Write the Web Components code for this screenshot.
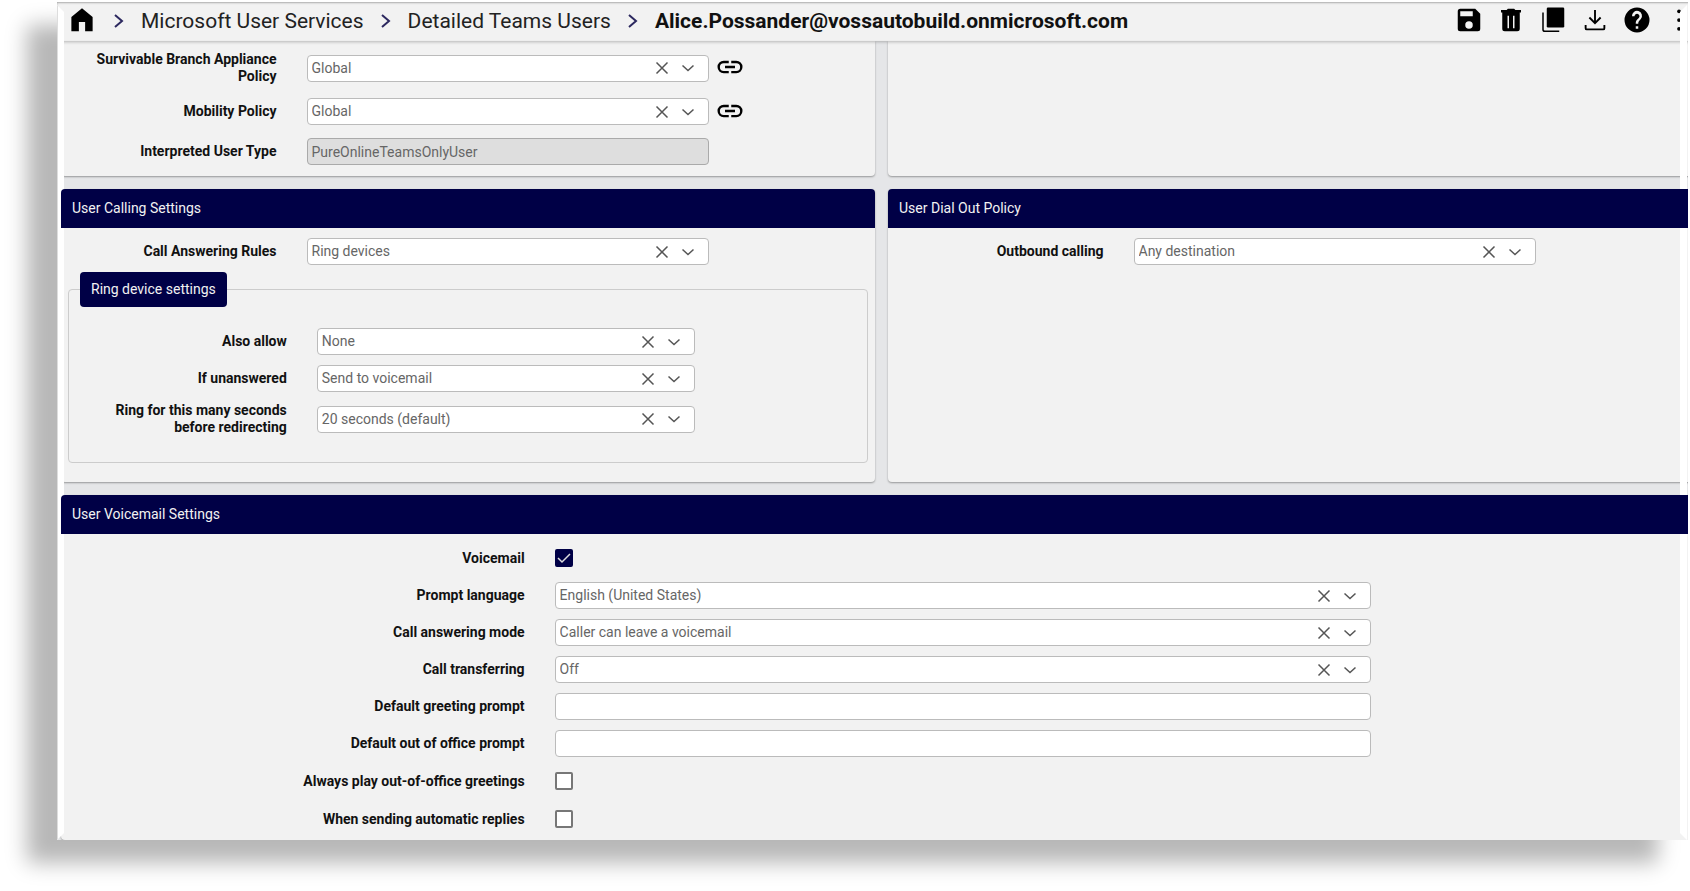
<!DOCTYPE html>
<html lang="en">
<head>
<meta charset="utf-8">
<title>Detailed Teams Users</title>
<style>
  body {
    margin: 0;
    font-family: Roboto, "Open Sans", sans-serif;
    font-size: 14px;
    line-height: 17px;
    color: #111;
  }
</style>
</head>
<body>
<app-window>
  <page-header slot="header">
    <icon-button slot="crumbs" icon="home" label="Home"></icon-button>
    <bread-crumb slot="crumbs">Microsoft User Services</bread-crumb>
    <bread-crumb slot="crumbs">Detailed Teams Users</bread-crumb>
    <bread-crumb slot="crumbs" current>Alice.Possander@vossautobuild.onmicrosoft.com</bread-crumb>
    <icon-button icon="save" label="Save"></icon-button>
    <icon-button icon="trash" label="Delete"></icon-button>
    <icon-button icon="copy" label="Clone"></icon-button>
    <icon-button icon="download" label="Export"></icon-button>
    <icon-button icon="help" label="Help"></icon-button>
    <icon-button icon="more" label="More actions"></icon-button>
  </page-header>

  <form-panel continued>
    <form-field label="Survivable Branch Appliance Policy" value="Global">
      <icon-button icon="link" label="Open policy"></icon-button>
    </form-field>
    <form-field label="Mobility Policy" value="Global">
      <icon-button icon="link" label="Open policy"></icon-button>
    </form-field>
    <form-field type="readonly" label="Interpreted User Type" value="PureOnlineTeamsOnlyUser"></form-field>
  </form-panel>
  <form-panel continued></form-panel>

  <form-panel heading="User Calling Settings">
    <form-field label="Call Answering Rules" value="Ring devices"></form-field>
    <field-group slot="group" legend="Ring device settings">
      <form-field label="Also allow" value="None"></form-field>
      <form-field label="If unanswered" value="Send to voicemail"></form-field>
      <form-field label="Ring for this many seconds before redirecting" value="20 seconds (default)"></form-field>
    </field-group>
  </form-panel>
  <form-panel heading="User Dial Out Policy">
    <form-field label="Outbound calling" value="Any destination"></form-field>
  </form-panel>

  <form-panel heading="User Voicemail Settings" wide>
    <form-field type="checkbox" label="Voicemail" checked></form-field>
    <form-field label="Prompt language" value="English (United States)"></form-field>
    <form-field label="Call answering mode" value="Caller can leave a voicemail"></form-field>
    <form-field label="Call transferring" value="Off"></form-field>
    <form-field type="text" label="Default greeting prompt"></form-field>
    <form-field type="text" label="Default out of office prompt"></form-field>
    <form-field type="checkbox" label="Always play out-of-office greetings"></form-field>
    <form-field type="checkbox" label="When sending automatic replies"></form-field>
  </form-panel>
</app-window>

<script>
(function() {
  const icons = {
    home: '<path d="M12 2.5 3.5 9.5V21h6v-7.500h5V21h6V9.500z"/>',
    save: '<path d="M17 3H5a2 2 0 0 0-2 2v14a2 2 0 0 0 2 2h14a2 2 0 0 0 2-2V7zm-5 16a3 3 0 1 1 0-6 3 3 0 0 1 0 6zm3-10H5V5h10z"/>',
    trash: '<path fill-rule="evenodd" d="M4 4h4.500l1-1h5l1 1H20v2H4zM5 6h14v13a2 2 0 0 1-2 2H7a2 2 0 0 1-2-2zm4.200 2.500v10h1.200v-10zm4.400 0v10h1.200v-10z"/>',
    copy: '<path d="M8 2h12a1 1 0 0 1 1 1v14a1 1 0 0 1-1 1H8a1 1 0 0 1-1-1V3a1 1 0 0 1 1-1z"/><path d="M4 6v13.500a1.500 1.500 0 0 0 1.500 1.500H17" fill="none" stroke="currentColor" stroke-width="1.200"/>',
    download: '<path d="M12 4v10M7.500 10l4.500 4.500 4.500-4.500M4.500 16v2.500a1 1 0 0 0 1 1h13a1 1 0 0 0 1-1V16" fill="none" stroke="currentColor" stroke-width="1.500"/>',
    help: '<path d="M12 2a10 10 0 1 0 0 20 10 10 0 0 0 0-20zm1 17h-2v-2h2zm2.070-7.750-.9.920C13.450 12.900 13 13.500 13 15h-2v-.5c0-1.100.45-2.100 1.170-2.830l1.240-1.260A2 2 0 1 0 10 9H8a4 4 0 1 1 7.070 2.250z"/>',
    more: '<circle cx="12" cy="5" r="1.500"/><circle cx="12" cy="12" r="1.500"/><circle cx="12" cy="19" r="1.500"/>',
    link: '<path d="M3.900 12A3.100 3.100 0 0 1 7 8.900h4V7H7a5 5 0 0 0 0 10h4v-1.900H7A3.100 3.100 0 0 1 3.900 12zM8 13h8v-2H8zm9-6h-4v1.900h4a3.100 3.100 0 0 1 0 6.200h-4V17h4a5 5 0 0 0 0-10z"/>'
  };

  function svg(name) {
    return `<svg viewBox="0 0 24 24" aria-hidden="true">${icons[name]}</svg>`;
  }

  class AppWindow extends HTMLElement {
    constructor() {
      super();
      this.attachShadow({ mode: 'open' }).innerHTML = `
        <style>
          :host {
            display: block;
            padding: 2px 2px 51px 57px;
            background: #fff;
          }
          /* drop shadow falls down and to the left */
          .window {
            position: relative;
            background: #e5e6e8;
            box-shadow: -30px 23px 20px 0 #b8b8b8;
          }
          .clip { overflow: hidden; }
          /* light bevel down both sides, panel headings run over it */
          .window::before, .window::after {
            content: "";
            position: absolute;
            z-index: 2;
            top: 3px;
            bottom: 0;
            width: 7px;
            background: #fff;
            pointer-events: none;
          }
          .window::before {
            left: 0;
            border-left: 1px solid #ddd;
            box-sizing: border-box;
            clip-path: polygon(0 0, 100% 7px, 100% calc(100% - 7px), 0 100%);
          }
          .window::after {
            right: 1px;
            clip-path: polygon(100% 0, 0 7px, 0 calc(100% - 7px), 100% 100%);
          }
          .content {
            display: grid;
            grid-template-columns: 1fr 1fr;
            gap: 13px;
            margin: 0 -14px 0 4px;
          }
          ::slotted([wide]) { grid-column: 1 / -1; }
        </style>
        <div class="window">
          <div class="clip">
            <slot name="header"></slot>
            <main class="content"><slot></slot></main>
          </div>
        </div>
      `;
    }
  }
  customElements.define('app-window', AppWindow);

  class PageHeader extends HTMLElement {
    constructor() {
      super();
      this.attachShadow({ mode: 'open' }).innerHTML = `
        <style>
          :host {
            position: relative;
            z-index: 1;
            display: flex;
            align-items: center;
            justify-content: space-between;
            box-sizing: border-box;
            height: 39px;
            margin-right: -14px;
            padding: 0 8px 4px 10px;
            background: #f2f2f2;
            box-shadow: inset 0 1px 2px rgba(0,0,0,.3), 0 1px 3px rgba(0,0,0,.25);
          }
          nav, .actions { display: flex; align-items: center; }
          .actions { gap: 12px; }
        </style>
        <nav aria-label="Breadcrumb"><slot name="crumbs"></slot></nav>
        <div class="actions"><slot></slot></div>
      `;
    }
  }
  customElements.define('page-header', PageHeader);

  class BreadCrumb extends HTMLElement {
    constructor() {
      super();
      this.attachShadow({ mode: 'open' }).innerHTML = `
        <style>
          :host {
            display: flex;
            align-items: center;
            padding-top: 2px;
            font-size: 21px;
            line-height: 24px;
            white-space: nowrap;
          }
          svg {
            width: 12px;
            height: 16px;
            margin: 0 16px;
            fill: none;
            stroke: #2c285f;
            stroke-width: 2;
          }
          a { color: #222; text-decoration: none; }
          :host([current]) a { color: #111; font-weight: 700; }
        </style>
        <svg viewBox="0 0 12 16" aria-hidden="true"><path d="M2 2l7 6-7 6"/></svg>
        <a href="#"><slot></slot></a>
      `;
    }
  }
  customElements.define('bread-crumb', BreadCrumb);

  class IconButton extends HTMLElement {
    constructor() {
      super();
      this.attachShadow({ mode: 'open' }).innerHTML = `
        <style>
          :host { display: block; }
          button {
            display: block;
            padding: 0;
            border: 0;
            background: none;
            color: #000;
            cursor: pointer;
          }
          svg { display: block; width: 30px; height: 30px; fill: currentColor; }
        </style>
        <button type="button" aria-label="${this.getAttribute('label')}">${svg(this.getAttribute('icon'))}</button>
      `;
    }
  }
  customElements.define('icon-button', IconButton);

  class FormPanel extends HTMLElement {
    constructor() {
      super();
      const heading = this.getAttribute('heading');
      this.attachShadow({ mode: 'open' }).innerHTML = `
        <style>
          :host {
            display: block;
            background: #f2f2f2;
            border-radius: 4px;
            box-shadow: 0 1px 2px rgba(0,0,0,.35);
          }
          :host([continued]) { border-radius: 0 0 4px 4px; }
          h2 {
            position: relative;
            z-index: 3;
            margin: 0;
            padding: 11px;
            border-radius: 4px 4px 0 0;
            background: #000046;
            color: #f2f2f2;
            font-size: 14px;
            font-weight: 400;
            line-height: 17px;
          }
          .fields {
            display: flex;
            flex-direction: column;
            gap: 10px;
            padding: 10px 5px 7px 4px;
          }
          :host([continued]) .fields { gap: 13px; padding-bottom: 11px; }
        </style>
        ${heading ? `<h2>${heading}</h2>` : ''}
        <div class="fields"><slot></slot></div>
        <slot name="group"></slot>
      `;
    }
  }
  customElements.define('form-panel', FormPanel);

  class FieldGroup extends HTMLElement {
    constructor() {
      super();
      this.attachShadow({ mode: 'open' }).innerHTML = `
        <style>
          :host { display: block; padding: 0 7px 19px; }
          fieldset {
            min-width: 0;
            margin: 0;
            padding: 0 21px 26px 11px;
            border: 1px solid #ccc;
            border-radius: 4px;
          }
          legend {
            padding: 9px 11px;
            border-radius: 4px;
            background: #000046;
            color: #f2f2f2;
            line-height: 17px;
          }
          .fields {
            display: flex;
            flex-direction: column;
            gap: 10px;
            padding: 21px 0 0 10px;
          }
        </style>
        <fieldset>
          <legend>${this.getAttribute('legend')}</legend>
          <div class="fields"><slot></slot></div>
        </fieldset>
      `;
    }
  }
  customElements.define('field-group', FieldGroup);

  class FormField extends HTMLElement {
    constructor() {
      super();
      this.attachShadow({ mode: 'open' }).innerHTML = `
        <style>
          :host {
            display: grid;
            grid-template-columns: 30% 50% 1fr;
            align-items: center;
          }
          label {
            padding-right: 30px;
            padding-left: 16px;
            text-align: right;
            font-weight: 700;
          }
          .control { display: grid; align-items: center; }
          .control > * { grid-area: 1 / 1; }
          select, input {
            box-sizing: border-box;
            width: 100%;
            height: 27px;
            margin: 0;
            padding: 0 4px;
            border: 1px solid #bbb;
            border-radius: 4px;
            background: #fff;
            color: #666;
            font: inherit;
            appearance: none;
          }
          input[readonly] { background: #dedede; border-color: #aaa; }
          .icons {
            display: flex;
            justify-self: end;
            align-items: center;
            gap: 12px;
            padding-right: 14px;
            pointer-events: none;
          }
          .icons button { display: block; padding: 0; border: 0; background: none; pointer-events: auto; }
          .icons svg {
            display: block;
            width: 14px;
            height: 14px;
            fill: none;
            stroke: #555;
            stroke-width: 1.5;
          }
          .tick { height: 28px; justify-content: start; }
          .tick input {
            width: 18px;
            height: 18px;
            padding: 0;
            border: 2px solid #777;
            border-radius: 2px;
          }
          .tick input:checked { border-color: #000046; background: #000046; }
          .tick svg {
            width: 18px;
            height: 18px;
            fill: none;
            stroke: #ddd;
            stroke-width: 1.5;
            pointer-events: none;
            visibility: hidden;
          }
          .tick input:checked + svg { visibility: visible; }
          .after { display: flex; align-items: center; height: 27px; padding: 0 6px 2px; box-sizing: border-box; }
        </style>
        <label for="control">${this.getAttribute('label')}</label>
        ${this.control()}
        <div class="after"><slot></slot></div>
      `;
    }

    control() {
      const value = this.getAttribute('value') || '';
      switch (this.getAttribute('type')) {
        case 'checkbox':
          return `<div class="control tick">
            <input id="control" type="checkbox" ${this.hasAttribute('checked') ? 'checked' : ''}>
            <svg viewBox="0 0 18 18" aria-hidden="true"><path d="M3 9l4 4 8-8"/></svg>
          </div>`;
        case 'text':
          return '<div class="control"><input id="control" type="text"></div>';
        case 'readonly':
          return `<div class="control"><input id="control" type="text" value="${value}" readonly></div>`;
        default:
          return `<div class="control">
            <select id="control"><option>${value}</option></select>
            <div class="icons">
              <button type="button" aria-label="Clear"><svg viewBox="0 0 14 14"><path d="M1.500 1.500l11 11M12.500 1.500l-11 11"/></svg></button>
              <svg viewBox="0 0 14 14" aria-hidden="true"><path d="M1.500 4.500l5.500 5 5.500-5"/></svg>
            </div>
          </div>`;
      }
    }
  }
  customElements.define('form-field', FormField);
})();
</script>
</body>
</html>
